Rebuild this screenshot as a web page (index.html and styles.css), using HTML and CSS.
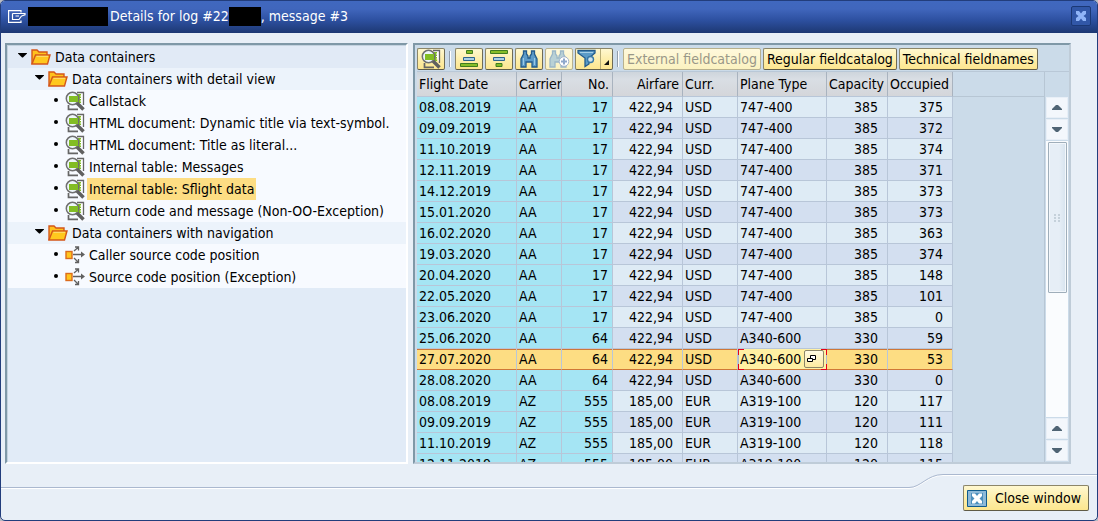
FILE: index.html
```html
<!DOCTYPE html>
<html lang="en">
<head>
<meta charset="utf-8">
<title>Details for log</title>
<link rel="stylesheet" href="styles.css">
</head>
<body>
<svg class="defs" aria-hidden="true">
  <symbol id="folder" viewBox="0 0 20 16">
    <path d="M1 15V1h5l2 2h8v3" fill="#ffc21c" stroke="#d4571a" stroke-width="1.4"/>
    <path d="M1 15 4.500 6H19l-2.500 9z" fill="#ffc81e" stroke="#d4571a" stroke-width="1.400"/>
    <path d="M5.500 7.300H17" stroke="#ffdf78"/>
  </symbol>
  <symbol id="detail" viewBox="0 0 20 20">
    <path d="M12 1.500h6.500V14" fill="#fff" stroke="#666" stroke-width="1.300"/>
    <path d="M3.500 14v4.300h9.500" fill="none" stroke="#666" stroke-width="1.700"/>
    <path d="M13 3h3v1.500h-1v1h1V7h-1v1h1v1.500h-1v1h1V12h-3z" fill="#7fbc22"/>
    <circle cx="7.500" cy="7.500" r="6.200" fill="#eef6fa" stroke="#707070" stroke-width="1.500"/>
    <path d="M4 5h9v6H4z" fill="#82bd24"/>
    <path d="M12 12l6.500 6.500" stroke="#606060" stroke-width="3.600"/>
  </symbol>
  <symbol id="nav" viewBox="0 0 20 18">
    <path d="M8 8.500h9M9 5l4-3.500M9 12l4 4M10 1h3.500v3.500M10 16.500h3.500V13" fill="none" stroke="#606060" stroke-width="1.300"/>
    <path d="M16 5.500v6l4-3z" fill="#606060"/>
    <rect x="1" y="5.500" width="6" height="7" fill="#ffc61d" stroke="#dc6b1c" stroke-width="1.400"/>
  </symbol>
</svg>
<main class="window">
  <header class="titlebar">
    <svg class="app-icon" width="18" height="13" viewBox="0 0 18 13" fill="none" stroke="#fff" stroke-width="1.200"><path d="M13 2.500V.6H.6v11.800H13V10.500M4.500 3.500h12.500v1.300l-3.500 1.200M4.500 3.500v6H11l2.500-3.500M7.500 6H11"/></svg>
    <h1 class="title"><span class="redacted redacted-wide"></span><span>Details for log #22</span><span class="redacted"></span><span>, message #3</span></h1>
    <button class="close" aria-label="Close"><svg width="12" height="12" viewBox="0 0 12 12"><path d="M1 1h3l2 2.500L8 1h3v3L8.500 6 11 8v3H8L6 8.500 4 11H1V8l2.500-2L1 4z" fill="#8fb4f7"/></svg></button>
  </header>
  <section class="content">
    <nav class="tree" aria-label="Data containers">
      <div class="node root"><i class="arrow"></i><svg class="icon"><use href="#folder"/></svg><span>Data containers</span></div>
      <div class="node group"><i class="arrow"></i><svg class="icon"><use href="#folder"/></svg><span>Data containers with detail view</span></div>
      <div class="node leaf"><i class="dot"></i><svg class="icon tall"><use href="#detail"/></svg><span>Callstack</span></div>
      <div class="node leaf"><i class="dot"></i><svg class="icon tall"><use href="#detail"/></svg><span>HTML document: Dynamic title via text-symbol.</span></div>
      <div class="node leaf"><i class="dot"></i><svg class="icon tall"><use href="#detail"/></svg><span>HTML document: Title as literal...</span></div>
      <div class="node leaf"><i class="dot"></i><svg class="icon tall"><use href="#detail"/></svg><span>Internal table: Messages</span></div>
      <div class="node leaf"><i class="dot"></i><svg class="icon tall"><use href="#detail"/></svg><span class="selected">Internal table: Sflight data</span></div>
      <div class="node leaf"><i class="dot"></i><svg class="icon tall"><use href="#detail"/></svg><span>Return code and message (Non-OO-Exception)</span></div>
      <div class="node group"><i class="arrow"></i><svg class="icon"><use href="#folder"/></svg><span>Data containers with navigation</span></div>
      <div class="node leaf"><i class="dot"></i><svg class="icon tall"><use href="#nav"/></svg><span>Caller source code position</span></div>
      <div class="node leaf"><i class="dot"></i><svg class="icon tall"><use href="#nav"/></svg><span>Source code position (Exception)</span></div>
    </nav>
    <section class="grid-panel">
      <div class="toolbar">
        <button class="btn tool" aria-label="Details"><svg width="20" height="20"><use href="#detail"/></svg></button>
        <i class="sep"></i>
        <button class="btn tool" aria-label="Sort ascending"><svg width="20" height="18" viewBox="0 0 20 18" stroke-width="1"><path d="M7.500.5h6v3h-6zM1.500 13.500h17v3h-17z" fill="#86bd27" stroke="#3f7d1f"/><path d="M4.500 7.500h11v3h-11z" fill="#a9cfe6" stroke="#2e648f"/></svg></button>
        <button class="btn tool" aria-label="Sort descending"><svg width="20" height="18" viewBox="0 0 20 18" stroke-width="1"><path d="M1.500.5h17v3h-17zM7 13.500h6v3H7z" fill="#86bd27" stroke="#3f7d1f"/><path d="M4.500 7.500h11v3h-11z" fill="#a9cfe6" stroke="#2e648f"/></svg></button>
        <button class="btn tool" aria-label="Find"><svg width="20" height="18" viewBox="0 0 20 18"><path d="M4.500 1h3v3L9 6v2h2V6l1.500-2V1h3v3l2.500 5v8h-5v-5h-6v5H2V9l2.500-5z" fill="#5c9bc8" stroke="#235b8c" stroke-width="1.300"/><path d="M4.500 8v7M15.500 8v7" stroke="#9bc9e5"/></svg></button>
        <button class="btn tool disabled" disabled aria-label="Find next"><svg width="22" height="18" viewBox="0 0 22 18"><path d="M4.500 1h3v3L9 6v2h2V6l1.500-2V1h3v3l2.500 5v8h-5v-5h-6v5H2V9l2.500-5z" fill="#b9d1d6" stroke="#9bb7c7" stroke-width="1.300"/><circle cx="16" cy="11.500" r="4.800" fill="#fff" stroke="#a2b2ca"/><path d="M16 8.500v6M13 11.500h6" stroke="#8fa8cc" stroke-width="2"/></svg></button>
        <button class="btn tool split" aria-label="Filter"><svg width="36" height="20" viewBox="0 0 36 20"><path d="M2 1.500h17v2.500l-6 5v6l-4 2.500V9L2 4z" fill="#5b9bc7" stroke="#235b8c" stroke-width="1.300"/><path d="M4 3.500h13" stroke="#a5cee6"/><circle cx="14.500" cy="10.500" r="3" fill="#cce2ed" stroke="#3778a7" stroke-width="1.400"/><path d="M24.500 0v20" stroke="#b7ad77"/><path d="M33 11v5h-5z" fill="#111"/></svg></button>
        <i class="sep"></i>
        <button class="btn disabled" disabled>External fieldcatalog</button>
        <button class="btn">Regular fieldcatalog</button>
        <button class="btn">Technical fieldnames</button>
      </div>
      <div class="grid-area">
        <div class="grid-clip">
          <table class="grid">
            <colgroup><col class="c-date"><col class="c-carrier"><col class="c-no"><col class="c-fare"><col class="c-curr"><col class="c-plane"><col class="c-cap"><col class="c-occ"></colgroup>
            <thead><tr><th>Flight Date</th><th>Carrier</th><th class="n">No.</th><th class="n">Airfare</th><th>Curr.</th><th>Plane Type</th><th>Capacity</th><th>Occupied</th></tr></thead>
            <tbody>
              <tr><td>08.08.2019</td><td>AA</td><td>17</td><td>422,94</td><td>USD</td><td>747-400</td><td>385</td><td>375</td></tr>
              <tr><td>09.09.2019</td><td>AA</td><td>17</td><td>422,94</td><td>USD</td><td>747-400</td><td>385</td><td>372</td></tr>
              <tr><td>11.10.2019</td><td>AA</td><td>17</td><td>422,94</td><td>USD</td><td>747-400</td><td>385</td><td>374</td></tr>
              <tr><td>12.11.2019</td><td>AA</td><td>17</td><td>422,94</td><td>USD</td><td>747-400</td><td>385</td><td>371</td></tr>
              <tr><td>14.12.2019</td><td>AA</td><td>17</td><td>422,94</td><td>USD</td><td>747-400</td><td>385</td><td>373</td></tr>
              <tr><td>15.01.2020</td><td>AA</td><td>17</td><td>422,94</td><td>USD</td><td>747-400</td><td>385</td><td>373</td></tr>
              <tr><td>16.02.2020</td><td>AA</td><td>17</td><td>422,94</td><td>USD</td><td>747-400</td><td>385</td><td>363</td></tr>
              <tr><td>19.03.2020</td><td>AA</td><td>17</td><td>422,94</td><td>USD</td><td>747-400</td><td>385</td><td>374</td></tr>
              <tr><td>20.04.2020</td><td>AA</td><td>17</td><td>422,94</td><td>USD</td><td>747-400</td><td>385</td><td>148</td></tr>
              <tr><td>22.05.2020</td><td>AA</td><td>17</td><td>422,94</td><td>USD</td><td>747-400</td><td>385</td><td>101</td></tr>
              <tr><td>23.06.2020</td><td>AA</td><td>17</td><td>422,94</td><td>USD</td><td>747-400</td><td>385</td><td>0</td></tr>
              <tr><td>25.06.2020</td><td>AA</td><td>64</td><td>422,94</td><td>USD</td><td>A340-600</td><td>330</td><td>59</td></tr>
              <tr class="current"><td>27.07.2020</td><td>AA</td><td>64</td><td>422,94</td><td>USD</td><td class="editing"><div class="editor"><input class="cell-input" aria-label="Plane Type" value="A340-600"><button class="f4" aria-label="Choose value"><svg width="10" height="8" viewBox="0 0 10 8"><path d="M3.500.5h5v4h-5z" fill="#fff" stroke="#000"/><path d="M.5 3.500h5v3h-5z" fill="#fff" stroke="#000"/></svg></button><i class="corners"></i></div></td><td>330</td><td>53</td></tr>
              <tr><td>28.08.2020</td><td>AA</td><td>64</td><td>422,94</td><td>USD</td><td>A340-600</td><td>330</td><td>0</td></tr>
              <tr><td>08.08.2019</td><td>AZ</td><td>555</td><td>185,00</td><td>EUR</td><td>A319-100</td><td>120</td><td>117</td></tr>
              <tr><td>09.09.2019</td><td>AZ</td><td>555</td><td>185,00</td><td>EUR</td><td>A319-100</td><td>120</td><td>111</td></tr>
              <tr><td>11.10.2019</td><td>AZ</td><td>555</td><td>185,00</td><td>EUR</td><td>A319-100</td><td>120</td><td>118</td></tr>
              <tr><td>12.11.2019</td><td>AZ</td><td>555</td><td>185,00</td><td>EUR</td><td>A319-100</td><td>120</td><td>115</td></tr>
            </tbody>
          </table>
          <div class="grid-rest"></div>
        </div>
        <div class="scrollbar">
          <button class="step up" aria-label="Scroll up"></button>
          <button class="step down" aria-label="Scroll down"></button>
          <div class="track"><div class="thumb"><svg width="7" height="8" viewBox="0 0 7 8"><path d="M0 1h2M4 1h2M0 4h2M4 4h2M0 7h2M4 7h2" stroke="#a4b4bf"/></svg></div></div>
          <button class="step up" aria-label="Line up"></button>
          <button class="step down" aria-label="Line down"></button>
        </div>
      </div>
    </section>
  </section>
  <footer class="footer">
    <div class="edge-low"></div>
    <svg class="edge-curve" width="34" height="16" viewBox="0 0 34 16" fill="none"><path d="M0 14.500C12 14.500 18 1.500 34 1.500" stroke="#fff"/><path d="M0 13.500C12 13.500 18 .5 34 .5" stroke="#aab8cf"/></svg>
    <div class="edge-high">
      <button class="btn close-window"><svg width="20" height="17" viewBox="0 0 20 17"><path d="M.5.5h19v16H.5z" fill="#8db9d8" stroke="#0f5b8e"/><path d="M4 3h12v11H4z" fill="#4c8fbd"/><path d="M5 3.500h3l2 2.500 2-2.500h3v2.500l-2.500 2.500L15 11v2.500h-3L10 11l-2 2.500H5V11l2.500-2.500L5 6z" fill="#fff"/></svg>Close window</button>
    </div>
  </footer>
</main>
</body>
</html>
```
FILE: styles.css
```css
* { box-sizing: border-box; }
body {
  margin: 0;
  background: #b9bcc4;
  color: #000;
  font: 14px/20px "DejaVu Sans Condensed", "Noto Sans", sans-serif;
}
button, input { font: inherit; color: inherit; margin: 0; padding: 0; }
.defs { position: absolute; width: 0; height: 0; }
.window {
  display: flex;
  flex-direction: column;
  height: 100vh;
  border: 1px solid #223d7c;
  border-radius: 5px;
  background: #e8eff7;
  overflow: hidden;
}
.titlebar {
  display: flex;
  align-items: center;
  gap: 2px;
  height: 32px;
  flex: none;
  padding: 0 6px 2px 7px;
  background: linear-gradient(#4068bf, #4066bc 25%, #2d50a0 60%, #1d3873);
  color: #fff;
}
.title { display: flex; align-items: center; flex: 1; margin: 0; font-size: 14px; font-weight: 400; white-space: pre; }
.redacted { width: 32px; height: 19px; background: #000; }
.redacted-wide { width: 80px; margin-right: 2px; }
.close {
  display: grid;
  place-items: center;
  width: 20px;
  height: 20px;
  border: 1px solid #1b3875;
  border-radius: 2px;
  background: #3157a8;
}
.content {
  display: flex;
  flex: 1;
  min-height: 0;
  gap: 5px;
  padding: 10px 26px 10px 4px;
}
.tree {
  width: 403px;
  flex: none;
  border: 2px solid;
  border-color: #7f98a7 #fff #fff #7f98a7;
  box-shadow: inset 1px 1px #c3d2df;
  padding: 1px 0 0 1px;
  background: #e1ebf7;
  background-clip: padding-box;
  overflow: hidden;
}
.node { display: flex; align-items: center; height: 22px; white-space: nowrap; }
.node span { padding: 0 2px; line-height: 22px; }
.root { padding-left: 10px; background: #e1eaf6; }
.group { padding-left: 27px; background: #ecf3fb; }
.leaf { padding-left: 44px; background: #f7faff; }
.arrow { width: 9px; height: 5px; margin: 0 4px 4px 0; background: #000; clip-path: polygon(0 0, 100% 0, 100% 20%, 55% 100%, 45% 100%, 0 20%); }
.dot { width: 4px; height: 4px; margin: 0 7px 2px 2px; border-radius: 2px; background: #000; }
.icon { width: 20px; height: 16px; margin-right: 2px; flex: none; }
.tall { height: 20px; }
.selected { background: #fddd83; }
.grid-panel {
  display: flex;
  flex-direction: column;
  flex: 1;
  min-width: 0;
  border: 2px solid;
  border-color: #7f98a7 #bfccd8 #bfccd8 #7f98a7;
  padding-left: 2px;
  background: #cbdbe9;
}
.toolbar {
  display: flex;
  align-items: center;
  gap: 2px;
  height: 27px;
  flex: none;
  padding-top: 2px;
  border-bottom: 1px solid #b9c8d7;
}
.btn {
  display: flex;
  align-items: center;
  justify-content: center;
  height: 22px;
  padding: 0 3px;
  border: 1px solid #8c8669;
  border-bottom-color: #5f5b46;
  border-right-color: #6f6b54;
  border-radius: 2px;
  background: linear-gradient(#fff8d0, #fdeeac 50%, #fde68f);
  white-space: nowrap;
}
.tool { width: 28px; padding: 0; }
.split { width: 38px; }
.disabled { border-color: #b8b18e; background: linear-gradient(#fff9dc, #fbf2c0); color: #999788; }
.sep { width: 2px; height: 16px; margin: 0 2px; border-left: 1px solid #929daa; border-right: 1px solid #fff; }
.grid-area { display: flex; flex: 1; min-height: 0; }
.grid-clip { display: flex; flex: 1; min-width: 0; overflow: hidden; border-right: 1px solid #b7c6d4; }
.grid { width: 536px; flex: none; align-self: flex-start; table-layout: fixed; border-collapse: separate; border-spacing: 0; }
.grid-rest { flex: 1; margin-top: 24px; border-top: 1px solid #b7c6d4; }
.c-date { width: 100px; }
.c-carrier { width: 45px; }
.c-no { width: 51px; }
.c-fare { width: 70px; }
.c-curr { width: 55px; }
.c-plane { width: 89px; }
.c-cap { width: 61px; }
.c-occ { width: 65px; }
th, td { padding: 0; border-right: 1px solid #b8c6d8; border-bottom: 1px solid #b8c6d8; text-align: left; white-space: nowrap; overflow: hidden; }
th { height: 25px; padding: 0 2px; border-right-color: #a9b3bf; background: linear-gradient(#ced5dc, #d9dee4 30%, #d4d6da); font-weight: 400; }
.n { text-align: right; padding-right: 3px; }
td { height: 21px; padding: 0 2px; line-height: 20px; background: #deebf5; }
tr:nth-child(even) td { background: #d3dff0; }
tbody tr td:nth-child(-n+3) { background: #a5e5f4; }
td:nth-child(3) { text-align: right; padding-right: 4px; }
td:nth-child(4), td:nth-child(7), td:nth-child(8) { text-align: right; padding-right: 9px; }
tbody tr.current td { background: #fddd83; border-bottom-color: #cf7737; box-shadow: inset 0 1px #cf7737; }
tbody tr.current .editing { padding: 0; overflow: visible; background: #fff1a6; box-shadow: none; }
.editor { position: relative; display: flex; align-items: center; height: 20px; }
.cell-input { width: 66px; height: 18px; padding: 0 0 0 2px; border: 0; background: #fff0a3; }
.f4 { display: flex; align-items: center; justify-content: flex-start; width: 20px; height: 18px; padding-left: 2px; border: 1px solid #8c8669; border-radius: 2px; background: linear-gradient(#fffbe3, #fdea9f); }
.corners {
  position: absolute;
  inset: 0 -1px -1px 0;
  pointer-events: none;
  background:
    linear-gradient(90deg, #e5001a 6px, transparent 6px calc(100% - 6px), #e5001a calc(100% - 6px)) top / 100% 1px no-repeat,
    linear-gradient(90deg, #e5001a 6px, transparent 6px calc(100% - 6px), #e5001a calc(100% - 6px)) bottom / 100% 1px no-repeat,
    linear-gradient(#e5001a 6px, #aebcc9 6px calc(100% - 6px), #e5001a calc(100% - 6px)) left / 1px 100% no-repeat,
    linear-gradient(#e5001a 6px, #aebcc9 6px calc(100% - 6px), #e5001a calc(100% - 6px)) right / 1px 100% no-repeat;
}
.scrollbar { display: flex; flex-direction: column; width: 22px; flex: none; margin: 25px 1px 0; }
.step { display: grid; place-items: center; height: 22px; flex: none; border: 0; border-bottom: 1px solid #cbdbe9; background: #f3f7fc; box-shadow: inset 0 0 0 1px #e8eff7; }
.step::before { content: ""; width: 10px; height: 5px; background: #4f6474; }
.up::before { clip-path: polygon(40% 0, 60% 0, 100% 80%, 100% 100%, 0 100%, 0 80%); }
.down::before { clip-path: polygon(0 0, 100% 0, 100% 20%, 60% 100%, 40% 100%, 0 20%); }
.track { flex: 1; min-height: 0; padding: 1px 1px 0 2px; background: #fafcfe; border-bottom: 1px solid #cbdbe9; }
.thumb { display: grid; place-items: center; height: 55%; border: 1px solid #9faeba; border-radius: 1px; background: linear-gradient(90deg, #e6eef6 60%, #d6e3ee); box-shadow: inset 0 0 0 1px #f3f7fb; }
.footer { display: flex; flex: none; height: 46px; }
.edge-low { flex: 1; margin-top: 13px; border-top: 1px solid #aab8cf; box-shadow: inset 0 1px #fff; }
.edge-high { display: flex; align-items: flex-start; padding: 10px 8px 0 20px; border-top: 1px solid #aab8cf; box-shadow: inset 0 1px #fff; }
.close-window { height: 26px; gap: 8px; padding: 0 7px 0 3px; }
```
